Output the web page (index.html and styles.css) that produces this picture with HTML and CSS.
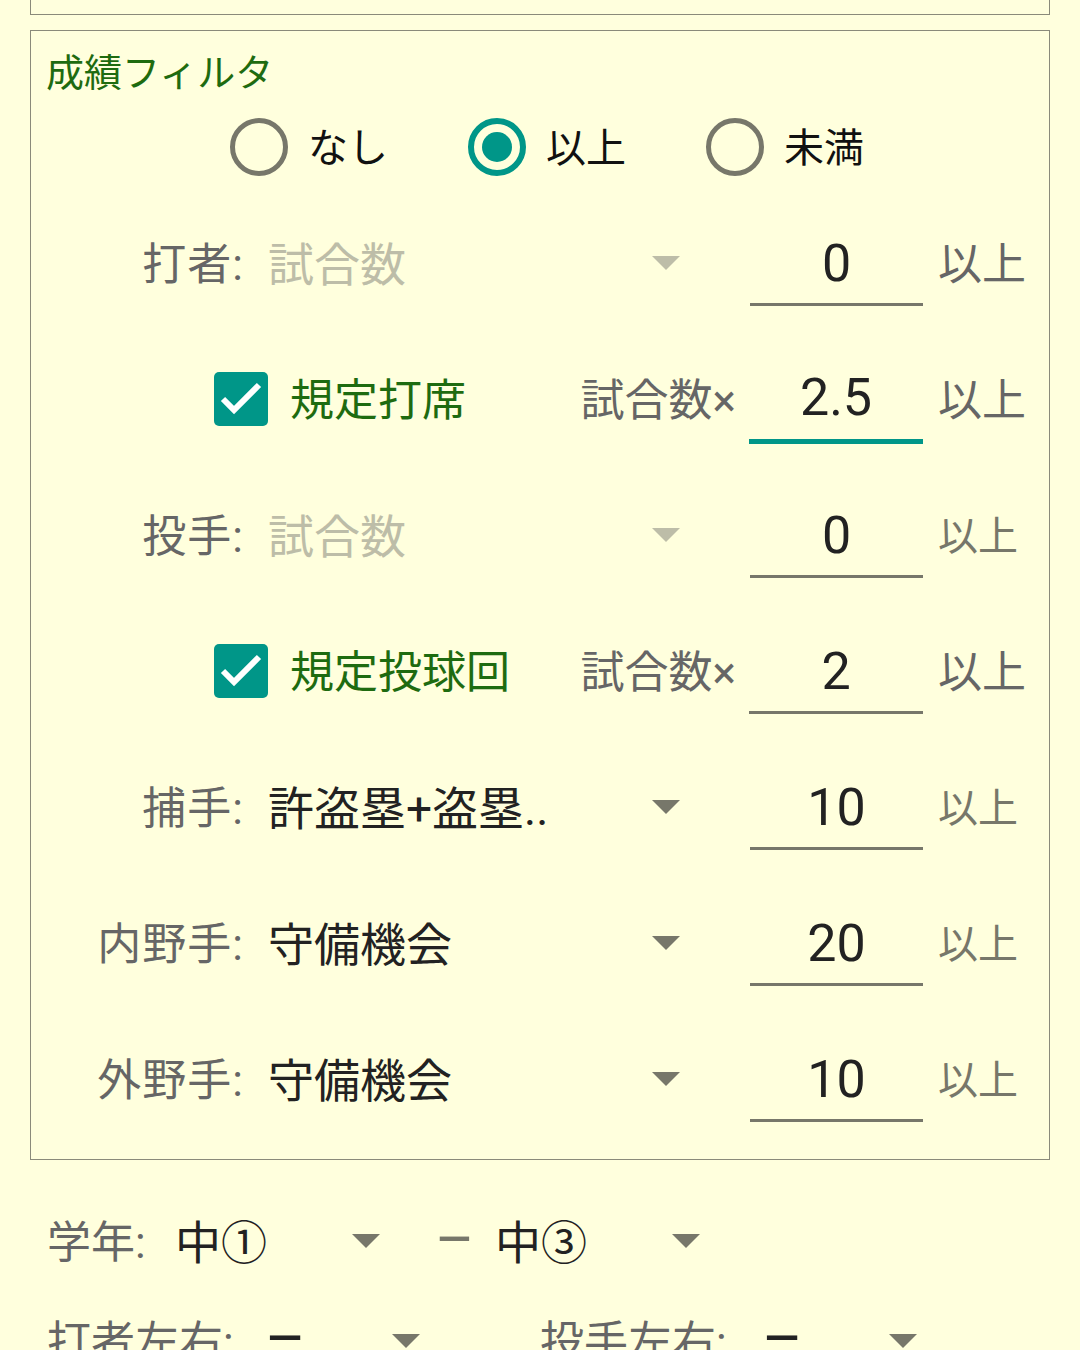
FILE: index.html
```html
<!DOCTYPE html>
<html lang="ja">
<head>
<meta charset="utf-8">
<title>成績フィルタ</title>
<meta name="viewport" content="width=device-width, initial-scale=1">
<link rel="stylesheet" href="styles.css">
</head>
<body>

<div class="page">
  <div class="prev-box"></div>

  <!-- Stats filter box -->
  <div class="filter-box">
    <div class="filter-title">成績フィルタ</div>

    <div class="radio-row">
      <div class="radio"><span class="radio-mark"></span><span class="radio-text">なし</span></div>
      <div class="radio on"><span class="radio-mark"></span><span class="radio-text">以上</span></div>
      <div class="radio"><span class="radio-mark"></span><span class="radio-text">未満</span></div>
    </div>

    <div class="stat-row">
      <div class="stat-label">打者:</div>
      <div class="select disabled"><span class="select-value">試合数</span><span class="arrow"></span></div>
      <div class="num-input">0</div>
      <div class="suffix big">以上</div>
    </div>

    <div class="stat-row check-row">
      <div class="check-item">
        <span class="checkbox"><svg viewBox="0 0 54 54" width="54" height="54"><polyline points="9,27 20,38 45,13" fill="none" stroke="#fff" stroke-width="6"/></svg></span>
        <span class="check-label">規定打席</span>
      </div>
      <div class="mult">試合数×</div>
      <div class="num-input focused">2.5</div>
      <div class="suffix big">以上</div>
    </div>

    <div class="stat-row">
      <div class="stat-label">投手:</div>
      <div class="select disabled"><span class="select-value">試合数</span><span class="arrow"></span></div>
      <div class="num-input">0</div>
      <div class="suffix">以上</div>
    </div>

    <div class="stat-row check-row">
      <div class="check-item">
        <span class="checkbox"><svg viewBox="0 0 54 54" width="54" height="54"><polyline points="9,27 20,38 45,13" fill="none" stroke="#fff" stroke-width="6"/></svg></span>
        <span class="check-label">規定投球回</span>
      </div>
      <div class="mult">試合数×</div>
      <div class="num-input">2</div>
      <div class="suffix big">以上</div>
    </div>

    <div class="stat-row">
      <div class="stat-label">捕手:</div>
      <div class="select"><span class="select-value">許盗塁+盗塁..</span><span class="arrow"></span></div>
      <div class="num-input">10</div>
      <div class="suffix">以上</div>
    </div>

    <div class="stat-row">
      <div class="stat-label">内野手:</div>
      <div class="select"><span class="select-value">守備機会</span><span class="arrow"></span></div>
      <div class="num-input">20</div>
      <div class="suffix">以上</div>
    </div>

    <div class="stat-row">
      <div class="stat-label">外野手:</div>
      <div class="select"><span class="select-value">守備機会</span><span class="arrow"></span></div>
      <div class="num-input">10</div>
      <div class="suffix">以上</div>
    </div>
  </div>

  <!-- Grade / handedness -->
  <div class="bottom">
    <div class="b-row grade-row">
      <div class="b-label grade-label">学年:</div>
      <div class="select small"><span class="select-value">中①</span><span class="arrow"></span></div>
      <span class="dash">–</span>
      <div class="select small"><span class="select-value">中③</span><span class="arrow"></span></div>
    </div>
    <div class="b-row">
      <div class="b-label hand-label">打者左右:</div>
      <div class="select tiny"><span class="select-value dash-value">–</span><span class="arrow"></span></div>
      <div class="b-label hand-label second">投手左右:</div>
      <div class="select tiny"><span class="select-value dash-value">–</span><span class="arrow"></span></div>
    </div>
  </div>
</div>

</body>
</html>
```

FILE: styles.css
```css
* {
  box-sizing: border-box;
}

body {
  margin: 0;
  background-color: #ffffdd;
  font-family: Roboto, "Noto Sans CJK JP", sans-serif;
  color: #222;
}

.page {
  padding: 0 30px;
}

/* bottom edge of the box above (scrolled off) */
.prev-box {
  height: 15px;
  border: 1px solid #8a8a7a;
  border-top: none;
}

.filter-box {
  margin-top: 15px;
  border: 1px solid #8a8a7a;
  padding: 10px 0 12px 0;
}

.filter-title {
  padding-left: 15px;
  font-size: 38px;
  line-height: 64px;
  color: #1e6b10;
}

/* Radio buttons */
.radio-row {
  display: flex;
  align-items: center;
  height: 84px;
  padding-left: 199px;
  gap: 80px;
  margin-bottom: 6px;
}

.radio {
  display: flex;
  align-items: center;
  gap: 20px;
  font-size: 40px;
  color: #111;
}

.radio-text {
  padding-bottom: 4px;
}

.radio-mark {
  width: 58px;
  height: 58px;
  border: 5px solid #77776a;
  border-radius: 50%;
}

.radio.on .radio-mark {
  border: 6px solid #009688;
  display: flex;
  align-items: center;
  justify-content: center;
}

.radio.on .radio-mark:after {
  content: "";
  width: 30px;
  height: 30px;
  border-radius: 50%;
  background-color: #009688;
}

/* Stat rows */
.stat-row {
  display: flex;
  align-items: center;
  height: 136px;
}

.stat-label {
  width: 213px;
  padding-bottom: 5px;
  text-align: right;
  font-size: 44px;
  letter-spacing: 1px;
  color: #666;
}

.select {
  display: flex;
  align-items: center;
  justify-content: space-between;
  width: 430px;
  margin-left: 24px;
  padding-right: 18px;
}

.select-value {
  padding-bottom: 5px;
  font-size: 46px;
  color: #222;
  white-space: nowrap;
}

.arrow {
  width: 0;
  height: 0;
  border-left: 14px solid transparent;
  border-right: 14px solid transparent;
  border-top: 14px solid #77776a;
}

.select.disabled .select-value {
  color: #bdbda8;
}

.select.disabled .arrow {
  border-top-color: #bdbda8;
}

.num-input {
  width: 173px;
  height: 86px;
  margin-left: 52px;
  padding-top: 6px;
  border-bottom: 3px solid #77776a;
  text-align: center;
  font-size: 52px;
  line-height: 75px;
  color: #222;
}

.num-input.focused {
  height: 90px;
  padding-top: 6px;
  border-bottom: 5px solid #009688;
}

.suffix {
  margin-left: 15px;
  padding-bottom: 5px;
  font-size: 40px;
  color: #77776a;
}

.suffix.big {
  font-size: 44px;
  color: #666;
}

/* Checkbox rows */
.check-row {
  padding-left: 183px;
}

.check-item {
  display: flex;
  align-items: center;
  width: 366px;
}

.checkbox {
  display: block;
  width: 54px;
  height: 54px;
  border-radius: 5px;
  background-color: #009688;
  margin-right: 22px;
}

.checkbox svg {
  display: block;
}

.check-label {
  padding-bottom: 5px;
  font-size: 44px;
  color: #1e6b10;
  white-space: nowrap;
}

.mult {
  width: 156px;
  padding-bottom: 5px;
  text-align: right;
  font-size: 44px;
  color: #666;
  white-space: nowrap;
}

.check-row .num-input {
  width: 174px;
  margin-left: 13px;
}

/* Grade & handedness */
.bottom {
  padding-left: 17px;
  margin-top: 31px;
}

.b-row {
  display: flex;
  align-items: center;
  height: 100px;
}

.b-label {
  padding-bottom: 5px;
  font-size: 44px;
  color: #666;
  white-space: nowrap;
}

.grade-label {
  width: 128px;
}

.select.small {
  width: 205px;
  margin-left: 0;
  padding-right: 0;
}

.dash {
  display: block;
  width: 30px;
  margin: 0 30px 0 55px;
  padding-bottom: 2px;
  text-align: center;
  font-size: 60px;
  line-height: 1;
  color: #77776a;
}

.select-value.dash-value {
  font-size: 62px;
}

.hand-label {
  width: 218px;
}

.hand-label.second {
  width: 222px;
  margin-left: 120px;
}

.select.tiny {
  width: 155px;
  margin-left: 0;
  padding-right: 0;
}
```
